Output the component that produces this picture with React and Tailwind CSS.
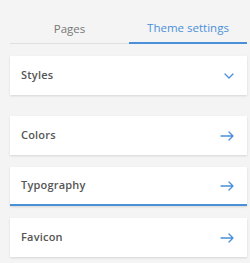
import React from "react";

const Arrow = () => (
  <svg width="14" height="10" viewBox="0 0 14 10" fill="none" stroke="#4a90d9" strokeWidth="1.3" strokeLinecap="round" strokeLinejoin="round">
    <path d="M1 5h12M9 1l4 4-4 4" />
  </svg>
);

const Chevron = () => (
  <svg width="10" height="6" viewBox="0 0 10 6" fill="none" stroke="#4a90d9" strokeWidth="1.3" strokeLinecap="round" strokeLinejoin="round">
    <path d="M1 1l4 4 4-4" />
  </svg>
);

const Card = ({ label, icon, active }) => (
  <div
    className={`h-[39px] bg-white flex items-center justify-between pl-[11px] pr-[13px] shadow-[0_1px_2px_rgba(0,0,0,0.12)] ${
      active ? "border-b-2 border-[#4a90d9]" : ""
    }`}
  >
    <span className="text-[11px] font-semibold text-[#555] tracking-[0.2px]">{label}</span>
    {icon}
  </div>
);

export default function App() {
  return (
    <div
      className="w-[250px] h-[263px] bg-[#f4f4f4] pl-[10px] pr-[3px] pt-[12px]"
      style={{ fontFamily: '"Open Sans", sans-serif' }}
    >
      <div className="flex border-b border-[#e0e0e0] h-[32px]">
        <div className="w-[119px] flex items-center justify-center pt-[2px] text-[11.5px] text-[#777]">Pages</div>
        <div className="flex-1 flex items-center justify-center pt-[2px] text-[11.5px] text-[#4a90d9] border-b-2 border-[#4a90d9] -mb-px">
          Theme settings
        </div>
      </div>
      <div className="mt-[12px]">
        <Card label="Styles" icon={<Chevron />} />
      </div>
      <div className="mt-[21px] flex flex-col gap-[12px]">
        <Card label="Colors" icon={<Arrow />} />
        <Card label="Typography" icon={<Arrow />} active />
        <Card label="Favicon" icon={<Arrow />} />
      </div>
    </div>
  );
}
